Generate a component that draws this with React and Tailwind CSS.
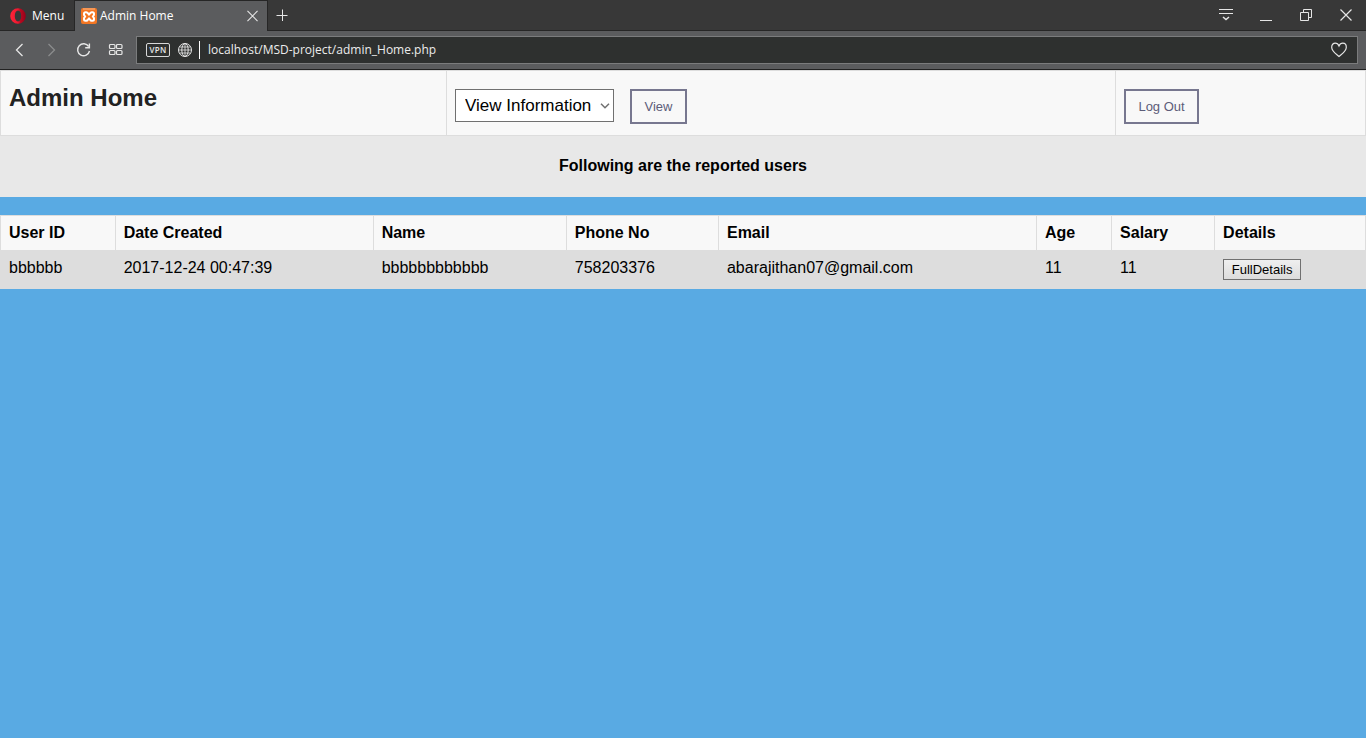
import React from "react";

const iconProps = { fill: "none", stroke: "currentColor", "aria-hidden": true };

function OperaLogo() {
  return (
    <svg width="16" height="16" viewBox="0 0 16 16" aria-hidden="true">
      <defs>
        <linearGradient id="opera" x1="0" y1="0" x2="1" y2="0">
          <stop offset="0" stopColor="#ff2438" />
          <stop offset="0.5" stopColor="#ee1830" />
          <stop offset="0.65" stopColor="#b80a20" />
          <stop offset="1" stopColor="#96001a" />
        </linearGradient>
      </defs>
      <path
        fill="url(#opera)"
        fillRule="evenodd"
        d="M8 .2a7.800 7.800 0 1 0 0 15.600A7.800 7.800 0 0 0 8 .2zM8 2.600c1.900 0 3.200 2.300 3.200 5.400s-1.300 5.400-3.200 5.400-3.200-2.300-3.200-5.400 1.300-5.400 3.200-5.400z"
      />
    </svg>
  );
}

function XamppLogo() {
  return (
    <svg width="16" height="16" viewBox="0 0 16 16" aria-hidden="true">
      <rect width="16" height="16" rx="2" fill="#f37623" />
      <path d="M2 1h12" stroke="#f9b98b" strokeWidth="1" />
      <path
        d="M8 6.700L6.800 5.200Q6.300 4.200 5.300 4.200H4.500Q3 4.200 3 5.700V6.500Q3 7.500 4.200 8.500Q3 9.500 3 10.500V11.300Q3 12.800 4.500 12.800H5.300Q6.300 12.800 6.800 11.800L8 10.300L9.200 11.800Q9.700 12.800 10.700 12.800H11.500Q13 12.800 13 11.300V10.500Q13 9.500 11.800 8.500Q13 7.500 13 6.500V5.700Q13 4.200 11.500 4.200H10.700Q9.700 4.200 9.200 5.200z"
        fill="none"
        stroke="#fff"
        strokeWidth="2"
        strokeLinejoin="round"
      />
    </svg>
  );
}

function CloseIcon({ width }) {
  return (
    <svg width={width} height="12" viewBox="0 0 12 12" strokeWidth="1.200" {...iconProps}>
      <path d="M.5.5l11 11M11.500.500l-11 11" />
    </svg>
  );
}

function TabStrip() {
  return (
    <div className="flex h-[31px] bg-[#383838] text-[12px] text-white">
      <button className="flex w-[75px] items-center gap-1.5 border-r border-b border-[#262626] pt-0.5 pl-2.5">
        <OperaLogo />
        <span>Menu</span>
      </button>
      <div className="flex w-48 items-center border-t border-[#262626] bg-[#5b5c5e] pl-1.5">
        <XamppLogo />
        <span className="ml-[3px] flex-1">Admin Home</span>
        <button aria-label="Close tab" className="mr-[9px] text-[#e6e6e6]">
          <CloseIcon width="11" />
        </button>
      </div>
      <div className="flex flex-1 items-center justify-between border-b border-l border-[#262626] pr-[13px] pl-2 text-[#e6e6e6]">
        <button aria-label="New tab">
          <svg width="12" height="12" viewBox="0 0 12 12" {...iconProps}>
            <path d="M.5 6.500h11M6.500.500v12" />
          </svg>
        </button>
        <div className="flex items-center gap-[26px]">
          <button aria-label="Tab menu">
            <svg width="14" height="14" viewBox="0 0 14 14" {...iconProps}>
              <path d="M0 1.500h14M0 5.500h14" />
              <path d="M4 9l3 2.500L10 9" strokeWidth="1.500" />
            </svg>
          </button>
          <button aria-label="Minimize">
            <svg width="14" height="14" viewBox="0 0 14 14" {...iconProps}>
              <path d="M1 12.500h12" />
            </svg>
          </button>
          <button aria-label="Restore">
            <svg width="14" height="14" viewBox="0 0 14 14" {...iconProps}>
              <path d="M1.500 4.500h8v8h-8zM4.500 4.500v-3h8v8h-3" />
            </svg>
          </button>
          <button aria-label="Close window">
            <CloseIcon width="14" />
          </button>
        </div>
      </div>
    </div>
  );
}

function Toolbar() {
  return (
    <div className="flex h-[39px] items-center border-b border-[#222222] bg-[#5b5c5e] pr-2 text-[#e6e6e6]">
      <div className="flex w-[136px] items-center gap-4 pl-3">
        <button aria-label="Back">
          <svg width="16" height="16" viewBox="0 0 16 16" strokeWidth="1.300" {...iconProps}>
            <path d="M10.500 2L4.500 8l6 6" />
          </svg>
        </button>
        <button aria-label="Forward" className="text-[#8b8c8d]">
          <svg width="16" height="16" viewBox="0 0 16 16" strokeWidth="1.300" {...iconProps}>
            <path d="M4.500 2l6 6-6 6" />
          </svg>
        </button>
        <button aria-label="Reload">
          <svg width="16" height="16" viewBox="0 0 16 16" strokeWidth="1.400" {...iconProps}>
            <path d="M12.700 4.500A6 6 0 1 0 13.500 9" />
            <path d="M13.400 1.500v4.200H9.200" />
          </svg>
        </button>
        <button aria-label="Speed dial">
          <svg width="16" height="16" viewBox="0 0 16 16" strokeWidth="1.200" {...iconProps}>
            <rect x="1.500" y="2.500" width="5.500" height="4" rx="1" />
            <rect x="8.500" y="2.500" width="5.500" height="4" rx="1" />
            <rect x="1.500" y="8.500" width="5.500" height="4" rx="1" />
            <rect x="8.500" y="8.500" width="5.500" height="4" rx="1" />
          </svg>
        </button>
      </div>
      <div className="flex h-7 flex-1 items-center border border-[#7b7c7d] bg-[#2e302f] pr-2.5 pl-[9px]">
        <button className="h-3.5 w-6 rounded-xs border border-[#d8d8d8] text-center text-[8px] leading-3 font-semibold tracking-wide">
          VPN
        </button>
        <svg className="ml-2" width="14" height="14" viewBox="0 0 14 14" {...iconProps}>
          <circle cx="7" cy="7" r="6.500" />
          <ellipse cx="7" cy="7" rx="3.200" ry="6.500" />
          <path d="M.7 7h12.600M7 .7v12.600M1.500 4h11M1.500 10h11" strokeWidth=".8" />
        </svg>
        <span className="ml-[7px] h-[18px] w-px bg-white" />
        <input
          type="text"
          aria-label="Address"
          defaultValue="localhost/MSD-project/admin_Home.php"
          className="ml-2 flex-1 bg-transparent text-[12px] text-[#ececec] outline-none"
        />
        <button aria-label="Add to favourites">
          <svg width="16" height="16" viewBox="0 0 16 16" strokeWidth="1.200" {...iconProps}>
            <path d="M8 14.500C5.500 12.300.7 9.300.7 5.200.7 2.700 2.200 1.200 4.200 1.200 6 1.200 7.300 2.300 8 4c.7-1.700 2-2.800 3.800-2.800 2 0 3.500 1.500 3.500 4 0 4.100-4.800 7.100-7.300 9.300z" />
          </svg>
        </button>
      </div>
    </div>
  );
}

const outlineButton = "h-[35px] border-2 border-[#77778f] text-[13px] text-[#5c5c78]";

function PageHeader() {
  return (
    <header className="flex h-[66px] border border-[#dddddd] bg-[#f8f8f8]">
      <div className="w-[32.7%] border-r border-[#dddddd] px-2 pt-3">
        <h1 className="text-2xl leading-[30px] font-bold text-[#222222]">Admin Home</h1>
      </div>
      <form className="flex w-[49.05%] items-start gap-4 border-r border-[#dddddd] px-2 pt-[18px]">
        <div className="relative">
          <select
            aria-label="Information to view"
            className="h-[33px] w-[159px] appearance-none border border-[#707070] bg-white pl-[9px] text-[17px] text-black"
          >
            <option>View Information</option>
          </select>
          <svg
            className="pointer-events-none absolute top-3.5 right-1"
            width="10"
            height="6"
            viewBox="0 0 10 6"
            strokeWidth="1.500"
            fill="none"
            stroke="#707070"
            aria-hidden="true"
          >
            <path d="M1 .7l4 4 4-4" />
          </svg>
        </div>
        <button type="button" className={`${outlineButton} w-[57px]`}>View</button>
      </form>
      <div className="px-2 pt-[18px]">
        <button type="button" className={`${outlineButton} w-[75px]`}>Log Out</button>
      </div>
    </header>
  );
}

const columns = [
  ["User ID", "w-[8.4%]"],
  ["Date Created", "w-[18.9%]"],
  ["Name", "w-[14.15%]"],
  ["Phone No", "w-[11.15%]"],
  ["Email", "w-[23.3%]"],
  ["Age", "w-[5.5%]"],
  ["Salary", "w-[7.55%]"],
  ["Details", "w-[11.05%]"],
];

const users = [
  ["bbbbbb", "2017-12-24 00:47:39", "bbbbbbbbbbbb", "758203376", "abarajithan07@gmail.com", "11", "11"],
];

function UsersTable() {
  return (
    <table className="mt-[18px] w-full table-fixed border-collapse text-left">
      <thead>
        <tr className="h-[35px] bg-[#f8f8f8]">
          {columns.map(([label, width]) => (
            <th key={label} scope="col" className={`${width} border border-[#dddddd] px-2 font-bold`}>
              {label}
            </th>
          ))}
        </tr>
      </thead>
      <tbody>
        {users.map((user) => (
          <tr key={user[0]} className="h-[38px] bg-[#dddddd] align-top">
            {user.map((value, i) => (
              <td key={i} className="border border-[#dddddd] px-2 pt-2">{value}</td>
            ))}
            <td className="border border-[#dddddd] px-2 pt-2">
              <button className="block h-[21px] w-[78px] border border-[#707070] bg-linear-to-b from-[#efefef] to-[#dcdcdc] text-[13px] leading-[19px]">
                FullDetails
              </button>
            </td>
          </tr>
        ))}
      </tbody>
    </table>
  );
}

export default function App() {
  return (
    <div className="flex min-h-screen flex-col bg-[#59aae3]">
      <div className="font-['Open_Sans',sans-serif]">
        <TabStrip />
        <Toolbar />
      </div>
      <main className="font-['Liberation_Sans',Arial,sans-serif] text-base leading-[18px] text-black">
        <PageHeader />
        <h2 className="bg-[#e8e8e8] pt-[21px] pb-[22px] text-center font-bold">
          Following are the reported users
        </h2>
        <UsersTable />
      </main>
    </div>
  );
}
